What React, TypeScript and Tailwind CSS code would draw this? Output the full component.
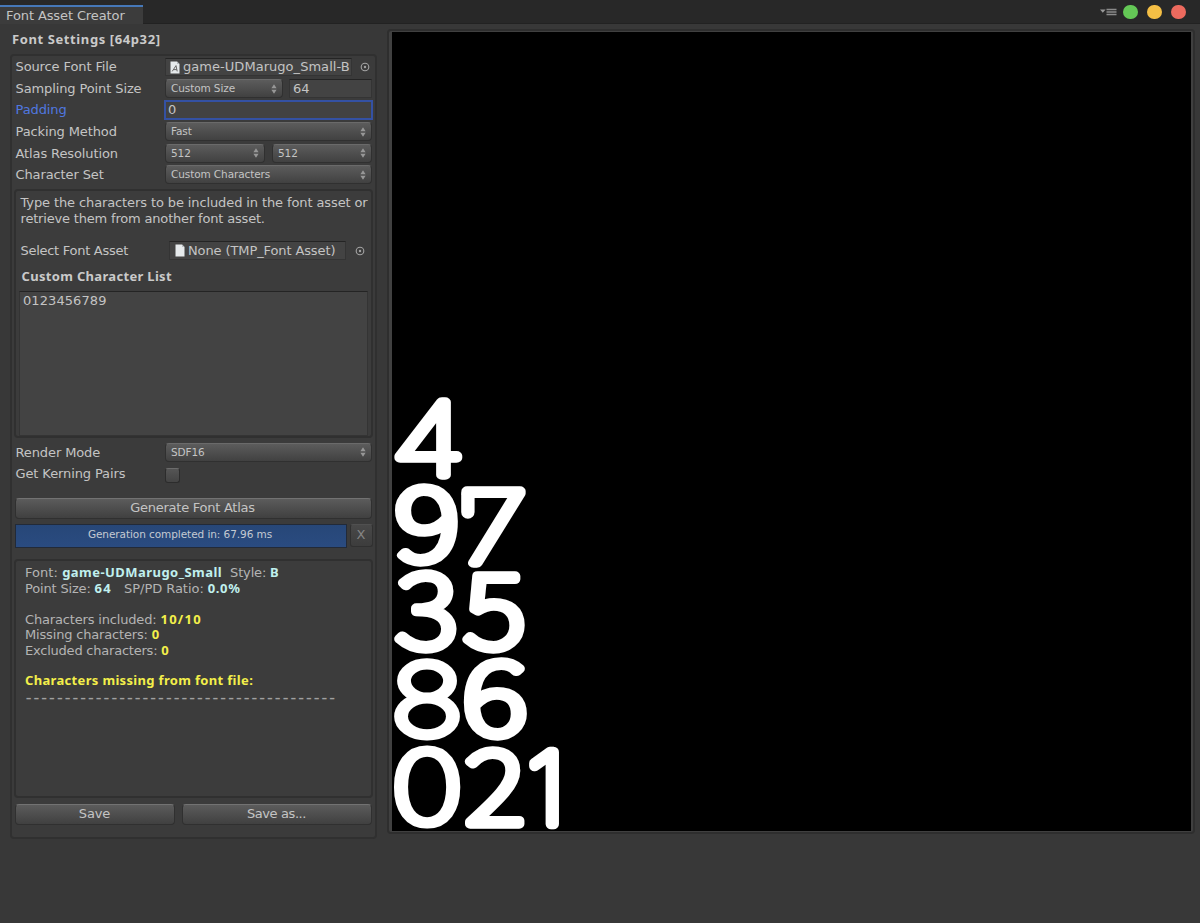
import React from "react";

type Glyph = { ch: string; x: number; y: number; w: number; h: number; family: string; stroke: number };

const INTER = "Inter";
const GOTHIC = "Noto Sans CJK JP";

const ATLAS: Glyph[] = [
  { ch: "4", x: 2, y: 365.8, w: 69.3, h: 82.4, family: INTER, stroke: 9.2 },
  { ch: "9", x: 2, y: 451.5, w: 64.6, h: 83.3, family: GOTHIC, stroke: 9 },
  { ch: "7", x: 69.2, y: 455, w: 65, h: 81.5, family: INTER, stroke: 9.2 },
  { ch: "3", x: 2, y: 538.8, w: 63.2, h: 83.7, family: GOTHIC, stroke: 9 },
  { ch: "5", x: 69.2, y: 540.5, w: 63.6, h: 82, family: GOTHIC, stroke: 9 },
  { ch: "8", x: 2, y: 626.2, w: 66.6, h: 83.3, family: INTER, stroke: 9 },
  { ch: "6", x: 71, y: 626.2, w: 64.8, h: 83.3, family: GOTHIC, stroke: 9 },
  { ch: "0", x: 2, y: 713.5, w: 66.6, h: 83.7, family: INTER, stroke: 9 },
  { ch: "2", x: 72.5, y: 715, w: 61, h: 82.2, family: GOTHIC, stroke: 9 },
  { ch: "1", x: 136.2, y: 715, w: 31, h: 82.5, family: INTER, stroke: 10.4 },
];

const SIZE = 98;
const ctx = document.createElement("canvas").getContext("2d")!;

function AtlasGlyph({ g }: { g: Glyph }) {
  ctx.font = `100 ${SIZE}px "${g.family}"`;
  const m = ctx.measureText(g.ch);
  const w = m.actualBoundingBoxRight + m.actualBoundingBoxLeft;
  const h = m.actualBoundingBoxAscent + m.actualBoundingBoxDescent;
  const sx = g.w / (w + g.stroke);
  const sy = g.h / (h + g.stroke);
  const tx = g.x + (m.actualBoundingBoxLeft + g.stroke / 2) * sx;
  const ty = g.y + (m.actualBoundingBoxAscent + g.stroke / 2) * sy;
  return (
    <text
      transform={`translate(${tx} ${ty}) scale(${sx} ${sy})`}
      fontFamily={`"${g.family}", sans-serif`}
      fontWeight={100}
      fontSize={SIZE}
      fill="#fff"
      stroke="#fff"
      strokeWidth={g.stroke}
      strokeLinejoin="round"
      strokeLinecap="round"
    >
      {g.ch}
    </text>
  );
}

function Row({ label, active, children }: { label: string; active?: boolean; children: React.ReactNode }) {
  return (
    <div className="flex h-[18px] items-center">
      <span className={`w-[149.5px] shrink-0 ${active ? "text-[#5078e0]" : ""}`}>{label}</span>
      <div className="flex grow items-center">{children}</div>
    </div>
  );
}

function Dropdown({ value, className }: { value: string; className: string }) {
  return (
    <div
      className={`flex h-[19px] items-center justify-between rounded-[4px] border border-[#303030] border-t-[#6a6a6a] bg-gradient-to-b from-[#5c5c5c] to-[#414141] pr-[5px] pl-[5px] text-[10.5px] tracking-[-0.1px] ${className}`}
    >
      <span>{value}</span>
      <svg width="6" height="10" viewBox="0 0 6 10" className="fill-[#979797]">
        <path d="M3 0.3 5.6 4.2H0.4ZM3 9.7 5.6 5.8H0.4Z" />
      </svg>
    </div>
  );
}

function Picker() {
  return (
    <svg width="10" height="10" viewBox="0 0 10 10" fill="none">
      <circle cx="5" cy="5" r="3.8" stroke="#a4a4a4" strokeWidth="1.1" />
      <circle cx="5" cy="5" r="1.2" fill="#a4a4a4" />
    </svg>
  );
}

function FileIcon({ letter }: { letter?: boolean }) {
  return (
    <svg width="10" height="13" viewBox="0 0 10 13" className="shrink-0">
      <path d="M0.5 0.5H7L9.5 3V12.5H0.5Z" fill="#e6eaec" />
      <path d="M7 0.5 9.5 3H7Z" fill="#b5babd" />
      {letter && <path d="M2.2 10.4 6 4.6 7.2 10.4M3.6 8.6H6.8" stroke="#666" strokeWidth="1" fill="none" />}
    </svg>
  );
}

const FIELD = "border border-[#343434] border-t-[#242424] bg-[#434343]";
const BOX = "rounded-[4px] border-2 border-[#303030] bg-[#3c3c3c]";
const BUTTON =
  "flex h-[21px] items-center justify-center rounded-[4px] border border-[#303030] border-t-[#727272] bg-gradient-to-b from-[#5c5c5c] to-[#404040] pb-[1px]";
const BOLD = "font-['Noto_Sans'] font-bold";

function Value({ className, children }: { className: string; children: React.ReactNode }) {
  return <b className={`font-['Noto_Sans'] leading-none ${className}`}>{children}</b>;
}

export default function App() {
  return (
    <div className="flex h-[923px] w-[1200px] flex-col overflow-hidden bg-[#383838] font-['DejaVu_Sans',sans-serif] text-[13px] tracking-[-0.11px] whitespace-nowrap text-[#c4c4c4]">
      <header className="flex h-[24px] shrink-0 items-start justify-between border-b border-[#222] bg-[#282828]">
        <div className="mt-[5px] flex h-[19px] w-[143px] items-center border-t-2 border-[#4678b8] bg-[#3c3c3c] pl-[6px]">
          Font Asset Creator
        </div>
        <div className="flex h-[24px] items-center pr-[14.5px]">
          <svg width="17" height="9" viewBox="0 0 17 9" className="mr-[6px]">
            <path d="M0 1.5H5.6L2.8 4.8Z" fill="#999" />
            <path d="M6.5 1.5H16.5M6.5 4H16.5M6.5 6.5H16.5" stroke="#8b8b8b" strokeWidth="1.5" />
          </svg>
          <div className="flex gap-[9.5px]">
            <span className="size-[14.5px] rounded-full bg-[#64c856]" />
            <span className="size-[14.5px] rounded-full bg-[#f5bf45]" />
            <span className="size-[14.5px] rounded-full bg-[#ed6a5e]" />
          </div>
        </div>
      </header>

      <main className="flex grow">
        <section className="w-[387px] shrink-0 pl-[10px]">
          <h1 className={`h-[30px] pt-[4.5px] pl-[2px] leading-[20px] tracking-[0.6px] text-[#cacaca] ${BOLD}`}>Font Settings [64p32]</h1>
          <div className="flex h-[784.5px] w-[367px] flex-col rounded-[4px] border-2 border-[#303030] bg-[#3b3b3b] pt-[2px] pl-[3.5px]">
            <div className="flex w-[357px] flex-col gap-[3.6px]">
              <Row label="Source Font File">
                <div className={`flex h-[18.5px] w-[187px] items-center overflow-hidden pl-[4px] ${FIELD}`}>
                  <FileIcon letter />
                  <span className="ml-[3px] tracking-[0.04px]">game-UDMarugo_Small-B</span>
                </div>
                <div className="ml-[8px]"><Picker /></div>
              </Row>
              <Row label="Sampling Point Size">
                <Dropdown value="Custom Size" className="w-[118px]" />
                <div className={`ml-[6px] flex h-[18.5px] w-[83px] items-center pl-[3px] ${FIELD}`}>64</div>
              </Row>
              <Row label="Padding" active>
                <div className="-ml-px flex h-[20px] w-[209px] items-center border-2 border-[#3451a3] bg-[#424242] pl-[2px]">0</div>
              </Row>
              <Row label="Packing Method">
                <Dropdown value="Fast" className="w-[207px]" />
              </Row>
              <Row label="Atlas Resolution">
                <Dropdown value="512" className="w-[100px]" />
                <Dropdown value="512" className="ml-[7px] w-[100px]" />
              </Row>
              <Row label="Character Set">
                <Dropdown value="Custom Characters" className="w-[207px]" />
              </Row>
            </div>

            <div className={`mt-[5px] -ml-[1.5px] h-[249px] w-[358.5px] px-[3px] pt-[4px] ${BOX}`}>
              <p className="pl-[1.5px] leading-[15.6px]">
                Type the characters to be included in the font asset or
                <br />
                <span className="tracking-[-0.18px]">retrieve them from another font asset.</span>
              </p>
              <div className="mt-[15px] flex h-[19px] items-center pl-[1.5px]">
                <span className="w-[148px] tracking-[-0.28px]">Select Font Asset</span>
                <div className={`flex h-[19px] w-[177.5px] items-center pl-[5px] ${FIELD}`}>
                  <FileIcon />
                  <span className="ml-[3.5px]">None (TMP_Font Asset)</span>
                </div>
                <div className="ml-[9px]"><Picker /></div>
              </div>
              <h2 className={`mt-[6px] pl-[2.5px] leading-[20px] tracking-[0.32px] text-[#cacaca] ${BOLD}`}>Custom Character List</h2>
              <div className={`mt-[5px] h-[145px] w-[349px] pl-[3px] leading-[17px] tracking-[0.08px] ${FIELD}`}>0123456789</div>
            </div>

            <div className="mt-[5.5px] flex w-[357px] flex-col gap-[3.6px]">
              <Row label="Render Mode">
                <Dropdown value="SDF16" className="w-[207px]" />
              </Row>
              <Row label="Get Kerning Pairs">
                <div className="mt-[2px] size-[15px] rounded-[3px] border border-[#2c2c2c] border-t-[#6c6c6c] bg-gradient-to-b from-[#555] to-[#444]" />
              </Row>
            </div>

            <div className={`mt-[15px] -ml-px w-[357px] tracking-[-0.25px] ${BUTTON}`}>
              <span className="mr-[1px]">Generate Font Atlas</span>
            </div>
            <div className="mt-[5px] -ml-[1px] flex h-[24px] w-[358px] gap-[3px]">
              <div className="flex w-[332px] items-center justify-center border border-[#222a38] bg-gradient-to-b from-[#274778] to-[#2a4b80] pr-px pb-[3px] text-[10.5px] tracking-[-0.07px] text-[#c4cad2]">
                Generation completed in: 67.96 ms
              </div>
              <div className="flex h-[23px] w-[23px] items-center justify-center rounded-[3px] border border-[#303030] border-t-[#505050] bg-gradient-to-b from-[#484848] to-[#3d3d3d] pb-[2px] text-[#858585]">X</div>
            </div>

            <div className={`mt-[10.5px] -ml-[1.5px] h-[239.5px] w-[358.5px] pt-[4.5px] pl-[9px] leading-[15.6px] tracking-[-0.17px] text-[#b4b4b4] ${BOX}`}>
              <div className="flex h-[15.6px] items-baseline whitespace-pre">
                <span className="tracking-[0.05px]">{"Font: "}</span><Value className="tracking-[0.46px] text-[#c0f0ee]">game-UDMarugo_Small</Value>{"  Style: "}<Value className="text-[#c0f0ee]">B</Value>
              </div>
              <div className="flex h-[15.6px] items-baseline whitespace-pre">
                <span>{"Point Size: "}</span><Value className="tracking-[1.2px] text-[#c0f0ee]">64</Value><span className="tracking-[-0.05px]">{"   SP/PD Ratio: "}</span><Value className="tracking-[0.6px] text-[#c0f0ee]">0.0%</Value>
              </div>
              <div className="mt-[15.6px] flex h-[15.6px] items-baseline whitespace-pre">{"Characters included: "}<Value className="tracking-[1.3px] text-[#f3ef4a]">10/10</Value></div>
              <div className="flex h-[15.6px] items-baseline whitespace-pre">{"Missing characters: "}<Value className="text-[#f3ef4a]">0</Value></div>
              <div className="flex h-[15.6px] items-baseline whitespace-pre"><span className="tracking-[-0.22px]">{"Excluded characters: "}</span><Value className="text-[#f3ef4a]">0</Value></div>
              <div className="mt-[15.6px] flex h-[15.6px] items-baseline"><Value className="tracking-[0.33px] text-[#f3ef4a]">Characters missing from font file:</Value></div>
              <div className="-ml-[1.5px] h-[15.6px] font-['DejaVu_Sans_Mono'] text-[17px] leading-[14px] tracking-[-2.45px] text-[#a0a0a0]">----------------------------------------</div>
            </div>

            <div className="mt-[5.5px] -ml-px flex w-[357px] gap-[7px]">
              <div className={`w-[160px] ${BUTTON}`}>Save</div>
              <div className={`grow tracking-[-0.4px] ${BUTTON}`}>Save as...</div>
            </div>
          </div>
        </section>

        <section className="mt-[5px] h-[805px] w-[808px] rounded-[4px] border-2 border-[#2e2e2e] bg-[#404040] pt-[0.5px] pl-[3px]">
          <svg width="799" height="799" viewBox="0 0.5 799 799" className="block bg-black">
            {ATLAS.map((g) => (
              <AtlasGlyph key={g.ch} g={g} />
            ))}
            <line x1="75.9" y1="463" x2="75.9" y2="480.5" stroke="#fff" strokeWidth="13.4" strokeLinecap="round" />
          </svg>
        </section>
      </main>
    </div>
  );
}
